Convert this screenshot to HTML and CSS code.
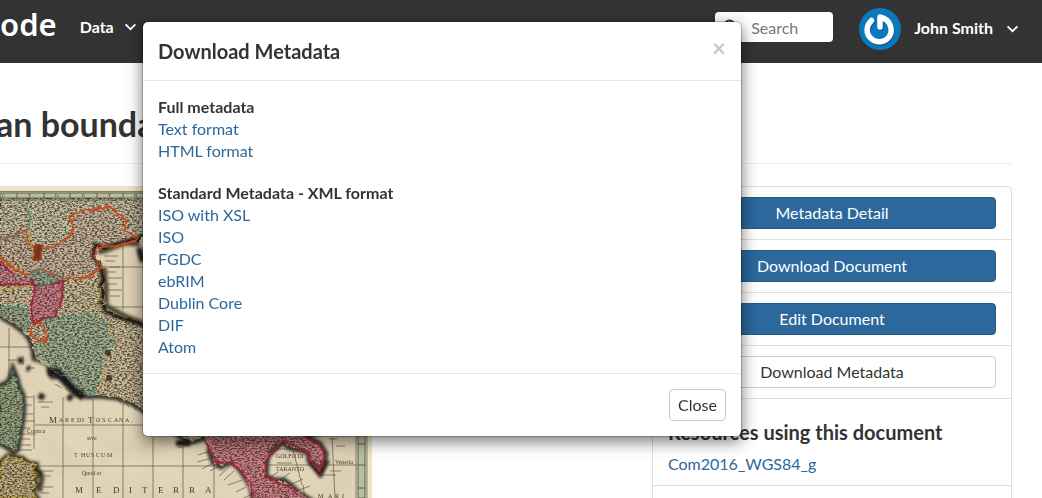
FILE: index.html
```
<!DOCTYPE html>
<html lang="en">
<head>
<meta charset="utf-8">
<title>Download Metadata</title>
<link rel="stylesheet" href="styles.css">
</head>
<body>
<header class="navbar">
  <a class="brand" href="#">ode</a>
  <nav class="nav">
    <button class="nav-item" type="button">Data
      <svg class="chevron" viewBox="0 0 14 9" aria-hidden="true"><path d="M1.500 1.500 7 7l5.500-5.500"/></svg>
    </button>
  </nav>
  <form class="search">
    <svg class="search-icon" viewBox="0 0 16 16" aria-hidden="true"><circle cx="6.500" cy="6.500" r="5"/><path d="m10.500 10.500 4 4"/></svg>
    <input class="search-input" type="text" placeholder="Search" aria-label="Search">
  </form>
  <button class="user" type="button">
    <svg class="avatar" viewBox="0 0 42 42" aria-hidden="true">
      <circle cx="21" cy="21" r="21" fill="#0a78bd"/>
      <g fill="none" stroke-linecap="round" stroke-linejoin="round" stroke-width="5.500">
        <path d="M12.500 13C7 18 6.500 26 12 31c5.500 5 14 4 18-1.500 4.500-6.500 2-17.500-9-20V19" stroke="#086199" transform="translate(.8 1)"/>
        <path d="M12.500 12.500C7 17.500 6.500 25.500 12 30.500c5.500 5 14 4 18-1.500 4.500-6.500 2-17.500-9-20V19" stroke="#fff"/>
      </g>
    </svg>
    <span class="user-name">John Smith</span>
    <svg class="chevron" viewBox="0 0 14 9" aria-hidden="true"><path d="M1.500 1.500 7 7l5.500-5.500"/></svg>
  </button>
</header>

<main class="page">
  <h2 class="page-title">an bounda</h2>
  <div class="columns">
    <svg class="map" viewBox="0 186 372 312" role="img" aria-label="Map">
      <defs>
        <path id="mainland" d="M0 198H358V420L302 436 319 444 325 454 323 464 320 471 310 461 309 452 299 449 290 447 282 441 275 446 268 454 266 461 265 477 275 481 284 481 294 489 297 493 309 500H254L252 487 242 471 235 463 232 462 226 463 221 466 214 462 210 451 212 444 205 437 196 440 189 441 165 425 144 410 133 403 117 397 97 395 88 396 80 393 72 382 66 376 60 375 53 376 50 370 50 364 42 360 35 358 34 350 32 343 29 337 25 332 13 323 6 319 0 315Z"/>
        <path id="adriatic" d="M170 232 143 237 137 243 133 241 123 245 113 247 104 250 97 247 95 256 101 262 102 267 104 274 105 281 102 285 105 293 103 302 107 310 115 314 123 317 133 320 143 323 240 390 305 431H345V232Z"/>
        <path id="corsica" d="M0 387 8 383 11 378 13 371 16 378 18 387 22 395 23 407 22 420 19 436 17 449 14 451 0 442Z"/>
        <path id="sardinia" d="M0 464 8 457 14 458 22 459 28 464 35 465 33 471 38 474 32 479 36 485 31 491 36 498H0Z"/>
        <clipPath id="land"><use href="#mainland"/><use href="#corsica"/><use href="#sardinia"/></clipPath>
        <filter id="paper" x="0" y="0" width="100%" height="100%">
          <feTurbulence type="fractalNoise" baseFrequency=".025 .035" numOctaves="4" seed="5"/>
          <feColorMatrix values="0 0 0 0 .42  0 0 0 0 .33  0 0 0 0 .2  .7 0 0 0 -.22"/>
        </filter>
        <filter id="engraving" x="0" y="0" width="100%" height="100%" color-interpolation-filters="sRGB">
          <feTurbulence type="fractalNoise" baseFrequency=".4 .7" numOctaves="2" seed="12"/>
          <feColorMatrix values="0 0 0 0 .2  0 0 0 0 .16  0 0 0 0 .11  3.600 0 0 0 -1.450"/>
        </filter>
        <filter id="soft"><feGaussianBlur stdDeviation="1.800"/></filter>
        <filter id="rough" x="-5%" y="-5%" width="110%" height="110%">
          <feTurbulence type="fractalNoise" baseFrequency=".22" numOctaves="2" seed="4"/>
          <feDisplacementMap in="SourceGraphic" scale="4" xChannelSelector="R" yChannelSelector="G"/>
        </filter>
      </defs>
      <rect y="186" width="372" height="312" fill="#e2d6ba"/>
      <rect y="186" width="372" height="312" filter="url(#paper)" opacity=".4"/>

      <g filter="url(#soft)" fill="none" stroke="#211a13" stroke-width="7" opacity=".85">
        <use href="#mainland"/><use href="#corsica"/><use href="#sardinia"/>
      </g>
      <g filter="url(#rough)">
        <use href="#mainland" fill="#cbbc9b"/>
        <use href="#corsica" fill="#97a482" stroke="#347a62"/>
        <use href="#sardinia" fill="#bfae80" stroke="#c5a83d" stroke-width="2"/>
        <path d="M0 198H143V240L135 238 125 229 128 222 121 214 114 207 104 207 94 210 81 211 71 215 73 228 70 235 60 244 50 249 41 246 32 247 27 238 26 230 10 237 0 241Z" fill="#c8c1a5"/>
        <path d="M0 241 26 230 29 244 37 248 53 247 62 241 71 236 73 225 69 216 82 211 102 208 111 207 117 213 127 221 124 231 137 237 132 244 113 247 97 247 95 255 102 266 90 276 76 280 57 276 40 270 26 275 14 269 0 260Z" fill="#c8b49c"/>
        <path d="M0 262 12 268 16 275 32 278 33 285 20 284 0 285Z" fill="#c9858f"/>
        <path d="M30 275 40 268 66 278 56 286 35 287Z" fill="#95aa90"/>
        <path d="M35 286 52 284 63 281 62 298 55 317 44 318 34 325 31 309Z" fill="#cd808c"/>
        <path d="M0 306 28 309 31 322 28 333 0 315Z" fill="#99a88a"/>
        <path d="M43 320 57 317 79 316 86 311 94 317 105 322 107 332 116 342 107 350 101 360 102 373 96 383 94 395 79 393 65 376 50 368 35 358 34 342 46 340Z" fill="#a0b091"/>
        <path d="M205 437H302L319 444 325 454 320 471 310 461 309 452 282 441 266 461 265 477 294 489 309 500H254L242 471 232 462 214 462 210 451Z" fill="#cd8088"/>
      </g>
      <g clip-path="url(#land)">
        <rect y="186" width="372" height="312" filter="url(#engraving)" opacity=".75"/>
      </g>

      <use href="#adriatic" fill="none" stroke="#211a13" stroke-width="7" filter="url(#soft)"/>
      <use href="#adriatic" fill="#ddd0b3" filter="url(#rough)"/>
      <g filter="url(#soft)" fill="none" stroke="#1f1812" stroke-width="5">
        <path d="M98 252 106 250 125 243 140 244M104 267 106 290 106 306 125 316 143 323" opacity=".8"/>
        <path d="M48 372 57 372 66 382 76 392 84 397" stroke-width="8"/>
        <path d="M39 395 44 398M68 396 72 399M18 361 23 360M27 368 30 369M139 248 143 262M176 443 190 443" stroke-width="6"/>
        <path d="M36 467 42 478 39 492M280 444 269 454M311 461 320 474 328 460" opacity=".8"/>
      </g>

      <g fill="none" stroke-width="2" filter="url(#rough)">
        <g stroke="#cb4b1c">
          <path d="M0 241 26 230 29 244 37 248 53 247 62 241 71 236 73 225 69 216 82 211 102 208 111 207 117 213 127 221 124 231 137 237"/>
          <path d="M137 240 116 246 97 247 95 257 102 267 90 276 76 280 57 276 40 269 26 275 14 268 0 257"/>
          <path d="M33 322 42 323 47 336 44 342 31 336Z"/>
        </g>
        <path d="M36 245 42 246 40 259 34 260Z" fill="#713319" stroke="#953b1b"/>
        <path d="M35 286 52 284 63 281 62 298 55 317 44 318 34 325 31 309ZM0 285 20 284 33 285 32 278M0 262 14 275" stroke="#a52035"/>
        <path d="M206 442 212 455 218 463 232 462 242 472 252 487 254 500M302 436 319 444 325 454 320 471 310 461 309 452 282 441 266 461 265 477 294 489 297 495" stroke="#9c283d"/>
        <g stroke="#3f8f83" stroke-width="1">
          <path d="M18 203 28 206 31 220 27 231 0 241M30 275 40 268 66 278 49 284 35 287M0 306 28 309"/>
          <path d="M43 320 57 317 79 316 86 311 94 317 105 322 107 332 116 342 107 350 101 360 102 373 96 383 94 395 79 393"/>
          <path d="M52 369 61 375 70 376 77 390"/>
        </g>
        <path d="M29 208 33 218 28 232 32 246M102 285 98 297 107 303 88 311 80 316M0 290 31 285M115 340 108 331M105 367 101 393" stroke="#b9a543" stroke-width="1"/>
      </g>
      <g fill="#282018" opacity=".75"><circle cx="108" cy="353" r="3"/><circle cx="109" cy="378" r="3"/></g>

      <g fill="none" stroke="#433829" stroke-width=".7" opacity=".8">
        <path d="M63 397V498M93 399V498M123 403V498M153 437V498M183 447V498M214 465V498M293 450 302 485M303 485 305 498M332 437 335 498M123 247V310M9 328V381M0 347H32M35 425H143M31 466H214M266 465H357M110 267H143M107 307H143M34 395V449"/>
        <path d="M104 256h14m-13 5h10m-8 6h13m-13 5h9m-8 6h14m-15 6h10m-10 6h15m-12 6h10M17 360h-9m15-4v9m3 3h9M24 397h9m-9 8h8m-8 9h9m-9 7h11m-13 7h8m-9 6h15m-16 5h10m-13 6h14m-17 5h18M38 402h15m-12 5h8M40 471h13m-9 5h7m-8 11h10m-12 6h8M115 397l6 6m2-3 6 7m2-5 5 8m1-4 6 7M62 388l-7-4m15 8-5-4M196 443l-18 5m32 3-12 4m14 3-15 4m16 1-11 6m17-3-9 5m19-4-10 9m15-5-10 9m18 0-14 5m18 2-10 5m16 2-14 7M269 478l9-6m0 9 12-8m-3 13 16-7m-7 12 14-5M276 449h18m-17 14h15m37-24h8m-1 7h9m-15 25h11m-19 4h14"/>
      </g>
      <g fill="#4b3d29" class="map-text">
        <text class="map-large" x="49" y="423">M</text>
        <text class="map-small" y="422" x="59 65 71 77 82">AREDI</text>
        <text class="map-large" x="88" y="423">T</text>
        <text class="map-small" y="422" x="96 102 108 114 119 125 131">OSCANA.</text>
        <text class="map-small" x="27" y="433">Corsica</text>
        <text class="map-small" x="87" y="440">sive</text>
        <text class="map-small" y="457" x="74 81 86 91 96 101 107">THUSCUM</text>
        <text class="map-small" x="82" y="475">Quod et</text>
        <text class="map-large" y="493" x="75 96 113 129 142 158 173 189 205">MEDITERRA</text>
        <text class="map-small" x="276" y="458">GOLFO DI</text>
        <text class="map-small" x="276" y="471">TARANTO</text>
        <text class="map-small" x="335" y="464">Venetia</text>
        <text class="map-small" y="498" x="318 328 335 342">MARI</text>
      </g>
      <path d="M0 186H372V191H0ZM367 186H372V498H367Z" fill="#eee3c6"/>
      <g fill="#b9bea0" stroke="#454634" stroke-width=".8">
        <path d="M0 193H365V198H0ZM358 198H365V498H358Z"/>
        <path d="M17 193v5M44 193v5M70 193v5M97 193v5M123 193v5M358 444h7M358 465h7M358 488h7"/>
        <path d="M0 191.500H367M0 200H356V498M367 192V498" fill="none" stroke-width=".6"/>
      </g>
      <g class="map-text map-edge" fill="#363227"><text x="2" y="197">C</text><text x="28" y="197">T</text><text x="55" y="197">D</text><text x="82" y="197">E</text><text x="108" y="197">T</text><text x="134" y="197">R</text></g>
    </svg>

    <ul class="actions">
      <li><button class="btn btn-primary btn-block" type="button">Metadata Detail</button></li>
      <li><button class="btn btn-primary btn-block" type="button">Download Document</button></li>
      <li><button class="btn btn-primary btn-block" type="button">Edit Document</button></li>
      <li><button class="btn btn-block" type="button">Download Metadata</button></li>
      <li class="resources"><h4 class="section-title">Resources using this document</h4><a class="link" href="#">Com2016_WGS84_g</a></li>
      <li></li>
    </ul>
  </div>
</main>

<section class="modal" role="dialog" aria-labelledby="modal-title">
  <header class="modal-header">
    <h4 class="section-title" id="modal-title">Download Metadata</h4>
    <button class="modal-x" type="button" aria-label="Dismiss">×</button>
  </header>
  <div class="modal-body">
    <div class="formats">
      <strong>Full metadata</strong>
      <a class="link" href="#">Text format</a>
      <a class="link" href="#">HTML format</a>
    </div>
    <div class="formats">
      <strong>Standard Metadata - XML format</strong>
      <a class="link" href="#">ISO with XSL</a>
      <a class="link" href="#">ISO</a>
      <a class="link" href="#">FGDC</a>
      <a class="link" href="#">ebRIM</a>
      <a class="link" href="#">Dublin Core</a>
      <a class="link" href="#">DIF</a>
      <a class="link" href="#">Atom</a>
    </div>
  </div>
  <footer class="modal-footer"><button class="btn" type="button">Close</button></footer>
</section>
</body>
</html>
```
FILE: styles.css
```
* { box-sizing: border-box; }
html { height: 100%; overflow: hidden; }
body {
  margin: 0;
  height: 100%;
  overflow: hidden;
  background: #fff;
  color: #333;
  font: 16px/22px Lato, sans-serif;
}
h2, h4, ul { margin: 0; padding: 0; }
button, input { font: inherit; }
button { cursor: pointer; }
a { text-decoration: none; }

.navbar {
  display: flex;
  align-items: flex-start;
  height: 63px;
  padding-right: 23px;
  background: #333;
  color: #fff;
}
.brand {
  padding-top: 4px;
  color: #fff;
  font: 600 31px/40px "Noto Sans", sans-serif;
}
.nav { display: flex; flex: 1; gap: 30px; padding: 16px 0 0 23px; }
.nav-item, .user {
  display: flex;
  align-items: center;
  padding: 0;
  border: 0;
  background: none;
  color: #fff;
  font-weight: 700;
}
.nav-item { gap: 10px; }
.chevron {
  width: 13px;
  height: 8px;
  fill: none;
  stroke: #fff;
  stroke-width: 2;
}
.search {
  display: flex;
  align-items: center;
  width: 118px;
  height: 30px;
  margin: 12px 26px 0 0;
  padding-left: 8px;
  border-radius: 4px;
  background: #fff;
}
.search-icon { flex: none; width: 16px; height: 16px; fill: none; stroke: #333; stroke-width: 2; }
.search-input {
  flex: 1;
  min-width: 0;
  padding: 2px 0 0 12px;
  border: 0;
  background: none;
  color: #333;
}
.search-input::placeholder { color: #777; opacity: 1; }
.user { gap: 13px; padding-top: 8px; }
.user-name { padding-bottom: 3px; }
.avatar { width: 42px; height: 42px; }

.page { padding-right: 30px; }
.page-title {
  margin-bottom: 22px;
  padding: 41px 0 19px;
  border-bottom: 1px solid #eee;
  font-size: 34px;
  line-height: 40px;
  font-weight: 700;
  white-space: nowrap;
  text-indent: -4px;
}
.columns { display: flex; justify-content: space-between; align-items: flex-start; }
.map { flex: none; width: 372px; height: auto; }
.map-text { font-family: "Liberation Serif", serif; }
.map-small { font-size: 6px; }
.map-large { font-size: 9px; }
.map-edge { font-size: 5px; }
.actions { width: 360px; list-style: none; }
.actions li {
  margin-bottom: -1px;
  padding: 10px 15px;
  border: 1px solid #ddd;
}
.actions li:first-child { border-radius: 4px 4px 0 0; }
.actions .resources { padding-top: 22px; }
.resources .section-title { margin-bottom: 10px; }

.btn {
  height: 32px;
  padding: 0 8px;
  border: 1px solid #ccc;
  border-radius: 4px;
  background: #fff;
  color: #333;
}
.btn-block { display: block; width: 100%; }
.btn-primary { border-color: #265a87; background: #2c689c; color: #fff; }
.link { color: #2c689c; }
.section-title { font-size: 20px; line-height: 22px; font-weight: 700; }

.modal {
  position: absolute;
  top: 21px;
  left: 142px;
  width: 600px;
  border: 1px solid rgba(0, 0, 0, .2);
  border-radius: 6px;
  background: #fff;
  background-clip: padding-box;
  box-shadow: 0 5px 15px rgba(0, 0, 0, .5);
}
.modal-header {
  display: flex;
  justify-content: space-between;
  align-items: flex-start;
  padding: 18px 15px;
  border-bottom: 1px solid #e5e5e5;
}
.modal-x {
  padding: 0;
  border: 0;
  background: none;
  color: #c8c8c8;
  font-size: 24px;
  line-height: 16px;
  font-weight: 700;
}
.modal-body { display: grid; gap: 20px; padding: 15px; }
.formats { display: flex; flex-direction: column; align-items: flex-start; }
.modal-footer {
  display: flex;
  justify-content: flex-end;
  padding: 15px;
  border-top: 1px solid #e5e5e5;
}
```
